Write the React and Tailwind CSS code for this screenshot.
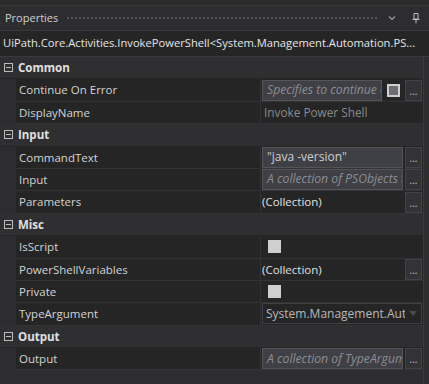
const font = { fontFamily: '"Open Sans", "Noto Sans", sans-serif' };

function Dots() {
  return (
    <button className="w-[17px] h-[21px] shrink-0 bg-[#333337] border border-[#434346] text-[#c8c8c8] text-[10px] leading-[14px] flex items-end justify-center pb-[2px]">
      ...
    </button>
  );
}

function TextBox({ value, placeholder, width = 'flex-1' }) {
  return (
    <div className={`${width} min-w-0 h-[21px] bg-[#3f3f46] border border-[#555558] px-[4px] flex items-center overflow-hidden whitespace-nowrap`}>
      {placeholder ? (
        <span className="italic text-[#8e8e93] text-[12.2px]">{placeholder}</span>
      ) : (
        <span className="text-[#d0d0d0] text-[12px]">{value}</span>
      )}
    </div>
  );
}

function Check() {
  return <div className="w-[13px] h-[13px] bg-[#cfcfcf] ml-[6px]" />;
}

function Category({ name }) {
  return (
    <div className="h-[22.4px] flex items-center bg-[#2f2f32] border-b border-[#252526]">
      <div className="w-[16px] flex justify-center">
        <div className="w-[9px] h-[9px] border border-[#bdbdbd] flex items-center justify-center">
          <div className="w-[5px] h-px bg-[#bdbdbd]" />
        </div>
      </div>
      <span className="font-bold text-[#e0e0e0] pl-[2px]">{name}</span>
    </div>
  );
}

function Row({ name, children }) {
  return (
    <div className="h-[22.4px] flex">
      <div className="w-[16px] shrink-0 bg-[#2d2d30]" />
      <div className="w-[245px] shrink-0 border-b border-r border-[#333337] flex items-center pl-[3px] text-[#d4d4d4] bg-[#252526]">
        {name}
      </div>
      <div className="flex-1 min-w-0 border-b border-[#333337] flex items-center gap-[2px] pl-[1px] pr-[1px] bg-[#252526]">
        {children}
      </div>
    </div>
  );
}

export default function App() {
  return (
    <div className="w-[429px] h-[384px] bg-[#2d2d30] text-[11.5px] overflow-hidden flex flex-col" style={font}>
      <div className="h-[6px] bg-[#2b2b2c] border-b border-[#3a3a3d]" />
      <div className="h-[24px] flex items-center pl-[5px] pr-[8px] gap-[8px] bg-[#2d2d30]">
        <span className="text-[#d0d0d0] text-[11px]">Properties</span>
        <div className="flex-1 h-[5px] bg-[radial-gradient(#55555a_1px,transparent_1px)] bg-[length:4px_4px]" />
        <svg width="10" height="10" viewBox="0 0 10 10" className="mr-[6px]">
          <path d="M2 3.5 L5 6.5 L8 3.5" stroke="#9a9a9a" strokeWidth="1.2" fill="none" />
        </svg>
        <svg width="10" height="12" viewBox="0 0 10 12">
          <path d="M3 1.5 H7 V7 H3 Z M1.5 7.5 H8.5 M5 7.5 V11.5" stroke="#bdbdbd" strokeWidth="1" fill="none" />
        </svg>
      </div>
      <div className="h-[27px] shrink-0 flex items-center pl-[3px] bg-[#252526] border-t border-b border-[#3a3a3d] text-[#e6e6e6] whitespace-nowrap text-[11.2px]">
        UiPath.Core.Activities.InvokePowerShell&lt;System.Management.Automation.PS...
      </div>
      <div className="flex-1 flex min-h-0">
        <div className="flex-1 min-w-0">
          <Category name="Common" />
          <Row name="Continue On Error">
            <TextBox placeholder="Specifies to continue executing" width="w-[121px]" />
            <div className="w-[13px] h-[13px] shrink-0 border-2 border-[#cfcfcf] bg-[#6e6e72] mx-[3px]" />
            <Dots />
          </Row>
          <Row name="DisplayName">
            <span className="pl-[2px] text-[#8a8a8a] text-[11.8px] whitespace-nowrap">Invoke Power Shell</span>
          </Row>
          <Category name="Input" />
          <Row name="CommandText">
            <TextBox value={'"java -version"'} />
            <Dots />
          </Row>
          <Row name="Input">
            <TextBox placeholder="A collection of PSObjects that" />
            <Dots />
          </Row>
          <Row name="Parameters">
            <span className="flex-1 text-[#e0e0e0]">(Collection)</span>
            <Dots />
          </Row>
          <Category name="Misc" />
          <Row name="IsScript">
            <Check />
          </Row>
          <Row name="PowerShellVariables">
            <span className="flex-1 text-[#e0e0e0]">(Collection)</span>
            <Dots />
          </Row>
          <Row name="Private">
            <Check />
          </Row>
          <Row name="TypeArgument">
            <div className="flex-1 min-w-0 h-[21px] border border-[#3f3f46] flex items-center pl-[3px] pr-[4px] overflow-hidden whitespace-nowrap">
              <span className="flex-1 min-w-0 overflow-hidden text-[#b8b8b8] text-[12px]">System.Management.Automation</span>
              <svg width="8" height="6" viewBox="0 0 8 6" className="ml-[4px] shrink-0">
                <path d="M0 0 H8 L4 5 Z" fill="#4a4a4f" />
              </svg>
            </div>
          </Row>
          <Category name="Output" />
          <Row name="Output">
            <TextBox placeholder="A collection of TypeArgument" />
            <Dots />
          </Row>
        </div>
        <div className="w-[6px] shrink-0 bg-[#2d2d30] border-l border-[#3a3a3d]" />
      </div>
    </div>
  );
}
